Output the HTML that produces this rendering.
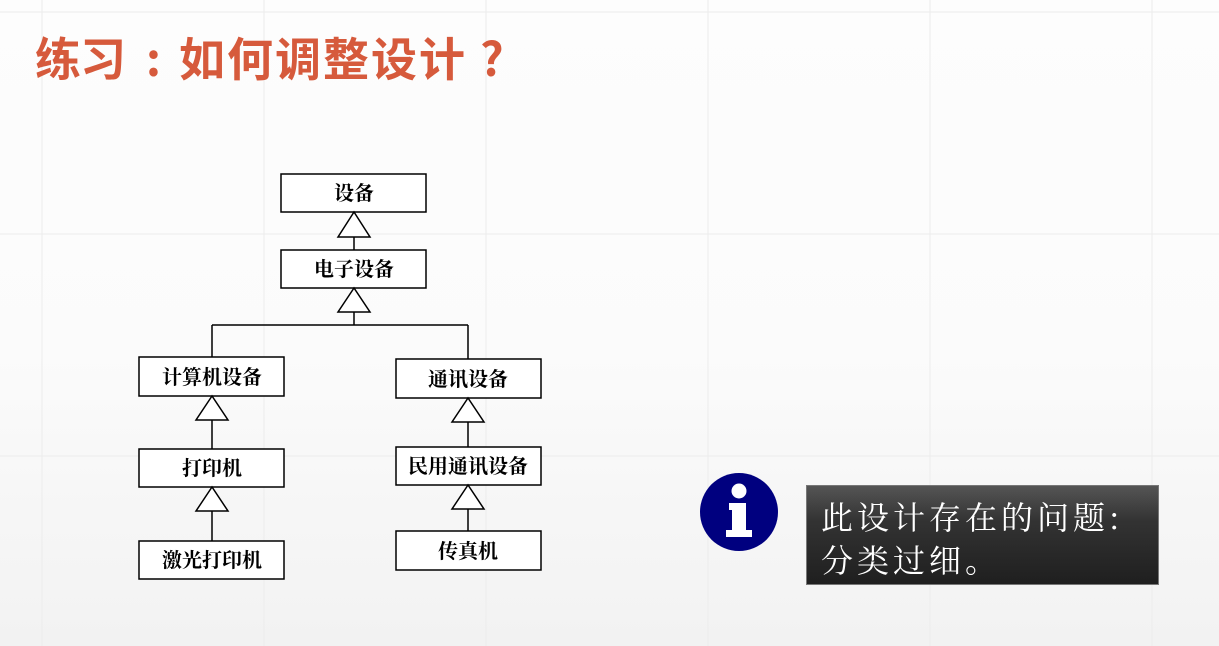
<!DOCTYPE html>
<html><head><meta charset="utf-8"><style>
html,body{margin:0;padding:0}
body{width:1219px;height:646px;position:relative;overflow:hidden;background:linear-gradient(#fdfdfd 0%,#fbfbfb 55%,#f2f2f2 100%);font-family:"Liberation Sans","Noto Sans CJK SC",sans-serif}
.t{position:absolute;top:27px;font-size:46px;font-weight:bold;color:#d65a3c;white-space:nowrap;font-family:"Noto Sans CJK SC",sans-serif;line-height:60px}
.box{position:absolute;left:806px;top:485px;width:353px;height:100px;background:linear-gradient(#555 0%,#333 35%,#1f1f1f 100%);border:1px solid #777;box-sizing:border-box;color:#fff;font-family:"Noto Serif CJK SC",serif;font-size:32px;line-height:43px;padding:9px 0 0 14px;letter-spacing:4px;white-space:nowrap}
</style></head><body>
<svg width="1219" height="646" style="position:absolute;left:0;top:0">
<g stroke="#ececec" stroke-width="1" fill="none">
<line x1="0" y1="12" x2="1219" y2="12"/>
<line x1="42" y1="0" x2="42" y2="646"/><line x1="264" y1="0" x2="264" y2="646"/><line x1="486" y1="0" x2="486" y2="646"/><line x1="708" y1="0" x2="708" y2="646"/><line x1="930" y1="0" x2="930" y2="646"/><line x1="1152" y1="0" x2="1152" y2="646"/>
<line x1="0" y1="234" x2="1219" y2="234"/><line x1="0" y1="456" x2="1219" y2="456"/>
</g>
<g stroke="#000" stroke-width="1.5" fill="#fff">
<rect x="281" y="174" width="145" height="38"/>
<rect x="281" y="250" width="145" height="38"/>
<rect x="139" y="357" width="145" height="39"/>
<rect x="396" y="359" width="145" height="39"/>
<rect x="139" y="449" width="145" height="38"/>
<rect x="139" y="541" width="145" height="38"/>
<rect x="396" y="447" width="145" height="38"/>
<rect x="396" y="531" width="145" height="39"/>
<path d="M354 212 L338 237 L370 237 Z"/><line x1="354" y1="237" x2="354" y2="250"/>
<path d="M354 288 L338 312 L370 312 Z"/><line x1="354" y1="312" x2="354" y2="325"/>
<path d="M212 325 H468 M212 325 V357 M468 325 V359" fill="none"/>
<path d="M212 396 L196 420 L228 420 Z"/><line x1="212" y1="420" x2="212" y2="449"/>
<path d="M212 487 L196 511 L228 511 Z"/><line x1="212" y1="511" x2="212" y2="541"/>
<path d="M468 398 L452 422 L484 422 Z"/><line x1="468" y1="422" x2="468" y2="447"/>
<path d="M468 485 L452 509 L484 509 Z"/><line x1="468" y1="509" x2="468" y2="531"/>
</g>
<g font-family="Noto Serif CJK SC, serif" font-weight="bold" font-size="20" text-anchor="middle" fill="#000">
<text x="354" y="200">设备</text>
<text x="354" y="276">电子设备</text>
<text x="212" y="384">计算机设备</text>
<text x="468" y="386">通讯设备</text>
<text x="212" y="475">打印机</text>
<text x="212" y="567">激光打印机</text>
<text x="468" y="473">民用通讯设备</text>
<text x="468" y="558">传真机</text>
</g>
<circle cx="739" cy="512" r="39" fill="#00007f"/>
<circle cx="739" cy="491" r="7.5" fill="#fff"/>
<path d="M729 503 H746 V530 H752 V537 H726 V530 H732 V510 H729 Z" fill="#fff"/>
</svg>
<div class="t" style="left:35px;letter-spacing:-1px">练习</div>
<div class="t" style="left:146px">:</div>
<div class="t" style="left:179px;letter-spacing:2px">如何调整设计</div>
<div class="t" style="left:480px">?</div>
<div class="box">此设计存在的问题:<br>分类过细。</div>
</body></html>
